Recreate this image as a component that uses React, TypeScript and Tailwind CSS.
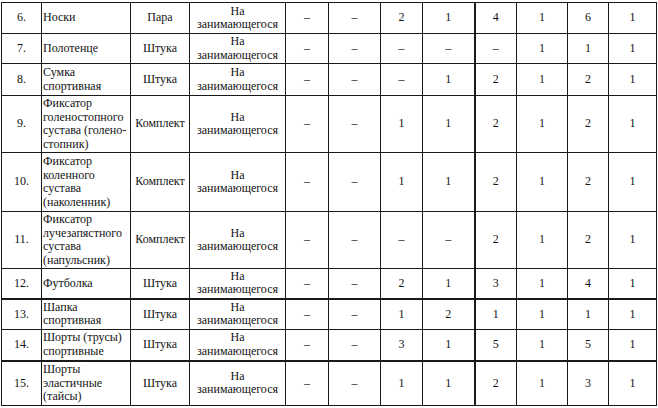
type Row = {
    num: string;
    name: string[];
    unit: string;
    values: string[];
    h: number;
    thickTop?: boolean;
};

const rows: Row[] = [
    { num: "6.", name: ["Носки"], unit: "Пара", values: ["–", "–", "2", "1", "4", "1", "6", "1"], h: 31 },
    { num: "7.", name: ["Полотенце"], unit: "Штука", values: ["–", "–", "–", "–", "–", "1", "1", "1"], h: 30 },
    { num: "8.", name: ["Сумка", "спортивная"], unit: "Штука", values: ["–", "–", "–", "1", "2", "1", "2", "1"], h: 32 },
    {
        num: "9.",
        name: ["Фиксатор", "голеностопного", "сустава (голено-", "стопник)"],
        unit: "Комплект",
        values: ["–", "–", "1", "1", "2", "1", "2", "1"],
        h: 57,
    },
    {
        num: "10.",
        name: ["Фиксатор", "коленного", "сустава", "(наколенник)"],
        unit: "Комплект",
        values: ["–", "–", "1", "1", "2", "1", "2", "1"],
        h: 59,
    },
    {
        num: "11.",
        name: ["Фиксатор", "лучезапястного", "сустава", "(напульсник)"],
        unit: "Комплект",
        values: ["–", "–", "–", "–", "2", "1", "2", "1"],
        h: 57,
    },
    { num: "12.", name: ["Футболка"], unit: "Штука", values: ["–", "–", "2", "1", "3", "1", "4", "1"], h: 30 },
    {
        num: "13.",
        name: ["Шапка", "спортивная"],
        unit: "Штука",
        values: ["–", "–", "1", "2", "1", "1", "1", "1"],
        h: 31,
        thickTop: true,
    },
    { num: "14.", name: ["Шорты (трусы)", "спортивные"], unit: "Штука", values: ["–", "–", "3", "1", "5", "1", "5", "1"], h: 31 },
    {
        num: "15.",
        name: ["Шорты", "эластичные", "(тайсы)"],
        unit: "Штука",
        values: ["–", "–", "1", "1", "2", "1", "3", "1"],
        h: 45,
        thickTop: true,
    },
];

const widths = [40, 89, 59, 96, 43, 52, 42, 52, 42, 51, 41, 48];

export default function App() {
    return (
        <div className="w-[658px] h-[408px] bg-white pl-[1px] pt-[2px] text-[#141414] text-[12px] leading-[13.5px] font-['Liberation_Serif','Times_New_Roman',serif]">
            <table className="table-fixed border-collapse w-[656px]">
                <colgroup>
                    {widths.map((w, i) => (
                        <col key={i} style={{ width: w }} />
                    ))}
                </colgroup>
                <tbody>
                    {rows.map((r) => (
                        <tr
                            key={r.num}
                            style={{ height: r.h }}
                            className={r.thickTop ? "border-t-2 border-[#1a1a1a]" : ""}
                        >
                            <td className="border border-[#1a1a1a] text-center align-middle p-0">{r.num}</td>
                            <td className="border border-[#1a1a1a] text-left align-middle py-0 pl-[1px] pr-0 whitespace-nowrap">
                                {r.name.map((line, i) => (
                                    <div key={i}>{line}</div>
                                ))}
                            </td>
                            <td className="border border-[#1a1a1a] text-center align-middle p-0">{r.unit}</td>
                            <td className="border border-[#1a1a1a] text-center align-middle p-0">
                                <div>На</div>
                                <div>занимающегося</div>
                            </td>
                            {r.values.map((v, i) => (
                                <td
                                    key={i}
                                    className={`border border-[#1a1a1a] text-center align-middle p-0 ${
                                        i === 4 ? "border-l-2" : ""
                                    }`}
                                >
                                    {v}
                                </td>
                            ))}
                        </tr>
                    ))}
                </tbody>
            </table>
        </div>
    );
}
